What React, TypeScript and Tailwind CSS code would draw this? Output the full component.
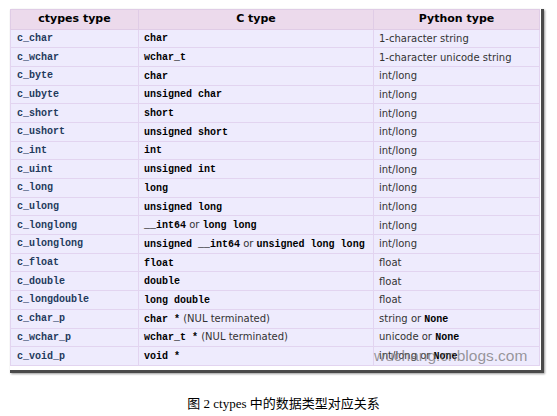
const rows: [string, React.ReactNode, React.ReactNode][] = [
  ['c_char', <M>char</M>, '1-character string'],
  ['c_wchar', <M>wchar_t</M>, '1-character unicode string'],
  ['c_byte', <M>char</M>, 'int/long'],
  ['c_ubyte', <M>unsigned char</M>, 'int/long'],
  ['c_short', <M>short</M>, 'int/long'],
  ['c_ushort', <M>unsigned short</M>, 'int/long'],
  ['c_int', <M>int</M>, 'int/long'],
  ['c_uint', <M>unsigned int</M>, 'int/long'],
  ['c_long', <M>long</M>, 'int/long'],
  ['c_ulong', <M>unsigned long</M>, 'int/long'],
  ['c_longlong', <><M>__int64</M> or <M>long long</M></>, 'int/long'],
  ['c_ulonglong', <><M>unsigned __int64</M> or <M>unsigned long long</M></>, 'int/long'],
  ['c_float', <M>float</M>, 'float'],
  ['c_double', <M>double</M>, 'float'],
  ['c_longdouble', <M>long double</M>, 'float'],
  ['c_char_p', <><M>char *</M> (NUL terminated)</>, <>string or <M>None</M></>],
  ['c_wchar_p', <><M>wchar_t *</M> (NUL terminated)</>, <>unicode or <M>None</M></>],
  ['c_void_p', <M>void *</M>, <>int/long or <M>None</M></>],
];

function M({ children }: { children: React.ReactNode }) {
  return <span className="font-['Liberation_Mono',monospace] font-bold text-[10px] text-black">{children}</span>;
}

export default function App() {
  return (
    <div className="w-[557px] h-[416px] bg-white relative">
      <div className="pt-[9px] pl-[10px]">
        <div className="w-[534px] border-r-[3px] border-b-[3px] border-[#4a4a4a] pr-[3px] pb-[4px] shadow-[1px_1px_2px_rgba(0,0,0,0.4)] relative">
          <table className="border-collapse w-[529px] table-fixed font-['DejaVu_Sans',sans-serif] text-[10px] text-[#333]">
            <colgroup>
              <col className="w-[128px]" />
              <col className="w-[235px]" />
              <col className="w-[166px]" />
            </colgroup>
            <thead>
              <tr className="h-[19.5px] bg-[#ecdaec]">
                <th className="border border-[#e0cce6] font-bold text-black text-[11px] text-center">ctypes type</th>
                <th className="border border-[#e0cce6] font-bold text-black text-[11px] text-center">C type</th>
                <th className="border border-[#e0cce6] font-bold text-black text-[11px] text-center">Python type</th>
              </tr>
            </thead>
            <tbody>
              {rows.map(([a, b, c]) => (
                <tr key={a} className="h-[18.7px] bg-[#eeebfd]">
                  <td className="border border-[#e2d4f0] pl-[6px] font-['Liberation_Mono',monospace] font-bold text-[10px] text-[#233a5c]">{a}</td>
                  <td className="border border-[#e2d4f0] pl-[5px] whitespace-nowrap">{b}</td>
                  <td className="border border-[#e2d4f0] pl-[5px] whitespace-nowrap">{c}</td>
                </tr>
              ))}
            </tbody>
          </table>
          <div className="absolute left-[364px] bottom-[6px] font-['Liberation_Sans',sans-serif] text-[15.5px] leading-none text-[rgba(110,110,110,0.7)]">
            wuchang.cnblogs.com
          </div>
        </div>
      </div>
      <div className="mt-[21px] text-center pl-[10px] font-['Liberation_Serif','Noto_Sans_CJK_SC',serif] text-[13px] text-black">
        图 2 ctypes 中的数据类型对应关系
      </div>
    </div>
  );
}
